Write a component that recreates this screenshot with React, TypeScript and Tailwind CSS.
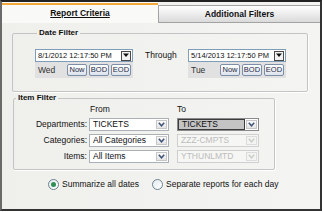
import React from 'react'

const FONT = "font-['Liberation_Sans',Arial,sans-serif]"

function DropArrow() {
  return (
    <span className="flex h-[10px] w-[10px] items-center justify-center border border-[#4a4a4a] bg-[#f2f2f2]">
      <svg width="6" height="5" viewBox="0 0 6 5">
        <path d="M0 0.5h6L3 4z" fill="#111" />
      </svg>
    </span>
  )
}

function DateBox({ value, day }: { value: string; day: string }) {
  return (
    <div className="flex w-[98px] flex-col">
      <div className="flex h-[13px] items-center border border-[#7f9db9] bg-white pl-[2px] pr-[1px]">
        <span className="flex-1 text-[7.5px] leading-none text-[#111]">{value}</span>
        <DropArrow />
      </div>
      <div className="flex h-[16px] items-center bg-[#e1e1e1] pl-[3px] pr-[2px]">
        <span className="flex-1 text-[8.5px] text-[#333]">{day}</span>
        <div className="flex gap-[2px]">
          {['Now', 'BOD', 'EOD'].map((b) => (
            <span
              key={b}
              className="flex h-[12px] w-[20px] items-center justify-center rounded-[2px] border border-[#7d8ea8] bg-gradient-to-b from-white to-[#dde3ec] text-[7.5px] leading-none text-[#1c2a44]"
            >
              {b}
            </span>
          ))}
        </div>
      </div>
    </div>
  )
}

function Chevron({ color }: { color: string }) {
  return (
    <svg width="7" height="5" viewBox="0 0 7 5">
      <path d="M0.8 0.8L3.5 3.8L6.2 0.8" fill="none" stroke={color} strokeWidth="1.5" />
    </svg>
  )
}

type Variant = 'normal' | 'focused' | 'disabled'

function Select({ value, width, variant = 'normal' }: { value: string; width: string; variant?: Variant }) {
  const disabled = variant === 'disabled'
  return (
    <div
      className={`flex h-[13px] items-stretch border ${width} ${
        disabled ? 'border-[#cfcfcf] bg-[#f6f6f4]' : variant === 'focused' ? 'border-[#8a8a8a] bg-white' : 'border-[#a9b0b8] bg-white'
      }`}
    >
      <span
        className={`flex flex-1 items-center pl-[3px] text-[8.5px] leading-none ${
          disabled ? 'text-[#bcbcbc]' : 'text-[#111]'
        } ${variant === 'focused' ? 'border border-[#3c3c3c] bg-[#c4c4c4]' : ''}`}
      >
        {value}
      </span>
      <span
        className={`m-[1px] flex w-[11px] items-center justify-center border ${
          disabled ? 'border-[#dcdcdc] bg-[#f4f4f2]' : 'border-[#c6c6c6] bg-gradient-to-b from-[#fafafa] to-[#e4e4e4]'
        }`}
      >
        <Chevron color={disabled ? '#c7cfc7' : '#3f5478'} />
      </span>
    </div>
  )
}

function Radio({ label, checked }: { label: string; checked?: boolean }) {
  return (
    <label className="flex items-center gap-[3px]">
      <span className="flex h-[11px] w-[11px] items-center justify-center rounded-full border border-[#6b8290] bg-gradient-to-br from-[#e3eaee] to-white">
        {checked && <span className="h-[5px] w-[5px] rounded-full bg-[#2f8f55]" />}
      </span>
      <span className="text-[8.5px] text-[#111]">{label}</span>
    </label>
  )
}

const rows: { label: string; from: string; to: string; toVariant: Variant }[] = [
  { label: 'Departments:', from: 'TICKETS', to: 'TICKETS', toVariant: 'focused' },
  { label: 'Categories:', from: 'All Categories', to: 'ZZZ-CMPTS', toVariant: 'disabled' },
  { label: 'Items:', from: 'All Items', to: 'YTHUNLMTD', toVariant: 'disabled' },
]

export default function App() {
  return (
    <div className={`h-[212px] w-[324px] bg-white ${FONT}`}>
      <div className="flex h-[211px] w-[322px] flex-col border-2 border-l-[#6a6a6a] border-t-[#222] border-r-[#333] border-b-[#333] bg-gradient-to-r from-[#efefec] to-[#f4f4f2]">
        <div className="flex h-[21px]">
          <div className="flex w-[156px] flex-col bg-[#f9f9f8] pt-[1px]">
            <div className="h-[2px] bg-[#f3a93a]" />
            <div className="flex flex-1 items-center justify-center pb-[1px] text-[8.5px] font-bold text-[#111] underline">
              Report Criteria
            </div>
          </div>
          <div className="mt-[3px] flex flex-1 items-center justify-center border-b border-l border-t border-[#a3a3a3] bg-gradient-to-b from-white to-[#dadada] text-[8.5px] font-bold text-[#111]">
            Additional Filters
          </div>
        </div>

        <fieldset className="ml-[10px] mt-[5px] w-[296px] rounded-[2px] border border-[#c4c4c4] pb-[13px] pl-[22px] pt-[11px] shadow-[1px_1px_0_#fff]">
          <legend className="ml-[2px] px-[2px] text-[8px] font-bold leading-[10px] text-[#111]">Date Filter</legend>
          <div className="flex items-start">
            <DateBox value="8/1/2012 12:17:50 PM" day="Wed" />
            <div className="flex h-[13px] w-[55px] items-center pl-[12px] text-[8.5px] text-[#111]">Through</div>
            <DateBox value="5/14/2013 12:17:50 PM" day="Tue" />
          </div>
        </fieldset>

        <fieldset className="ml-[11px] mt-[1px] w-[262px] rounded-[2px] border border-[#c4c4c4] pb-[6px] pt-[1px] shadow-[1px_1px_0_#fff]">
          <legend className="ml-[2px] px-[2px] text-[8px] font-bold leading-[10px] text-[#111]">Item Filter</legend>
          <div className="flex h-[11px] items-center pl-[76px] text-[8.5px] text-[#111]">
            <span className="w-[87px]">From</span>
            <span>To</span>
          </div>
          <div className="mt-[3px] flex flex-col gap-[3px]">
            {rows.map((r) => (
              <div key={r.label} className="flex items-center">
                <span className="w-[75px] pr-[2px] text-right text-[8.5px] text-[#111]">{r.label}</span>
                <Select value={r.from} width="w-[80px]" />
                <div className="ml-[8px]">
                  <Select value={r.to} width="w-[82px]" variant={r.toVariant} />
                </div>
              </div>
            ))}
          </div>
        </fieldset>

        <div className="ml-[46px] mt-[8px] flex items-center gap-[13px]">
          <Radio label="Summarize all dates" checked />
          <Radio label="Separate reports for each day" />
        </div>
      </div>
    </div>
  )
}
